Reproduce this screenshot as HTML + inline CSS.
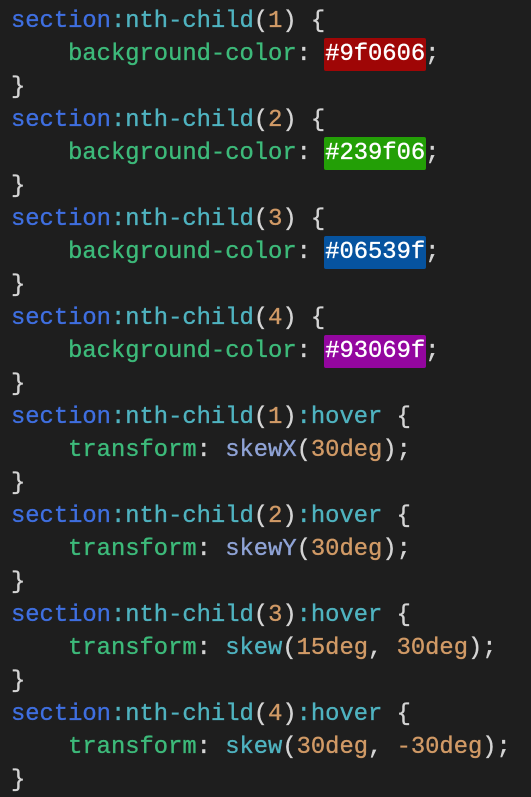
<!DOCTYPE html>
<html><head><meta charset="utf-8"><style>
html,body{margin:0;padding:0;background:#1e1e1e;}
body{width:531px;height:793px;overflow:hidden;}
pre{margin:0;padding:5px 0 0 11px;font-family:"Liberation Mono",monospace;font-size:23.8px;line-height:33px;color:#d4d4d4;-webkit-text-stroke:0.35px currentColor;}
.s{color:#3f6fe0}.t{color:#4fb3c0}.n{color:#d19a66}.p{color:#3dba7a}.f{color:#8fa3d6}.k{color:#4fb3c0}
.c{color:#fff;border-radius:2px;padding:3px 1px;margin:0 -1px}
</style></head><body><pre><span class="s">section</span><span class="t">:nth-child</span>(<span class="n">1</span>) {
    <span class="p">background-color</span>: <span class="c" style="background:#9f0606">#9f0606</span>;
}
<span class="s">section</span><span class="t">:nth-child</span>(<span class="n">2</span>) {
    <span class="p">background-color</span>: <span class="c" style="background:#239f06">#239f06</span>;
}
<span class="s">section</span><span class="t">:nth-child</span>(<span class="n">3</span>) {
    <span class="p">background-color</span>: <span class="c" style="background:#06539f">#06539f</span>;
}
<span class="s">section</span><span class="t">:nth-child</span>(<span class="n">4</span>) {
    <span class="p">background-color</span>: <span class="c" style="background:#93069f">#93069f</span>;
}
<span class="s">section</span><span class="t">:nth-child</span>(<span class="n">1</span>)<span class="t">:hover</span> {
    <span class="p">transform</span>: <span class="f">skewX</span>(<span class="n">30deg</span>);
}
<span class="s">section</span><span class="t">:nth-child</span>(<span class="n">2</span>)<span class="t">:hover</span> {
    <span class="p">transform</span>: <span class="f">skewY</span>(<span class="n">30deg</span>);
}
<span class="s">section</span><span class="t">:nth-child</span>(<span class="n">3</span>)<span class="t">:hover</span> {
    <span class="p">transform</span>: <span class="k">skew</span>(<span class="n">15deg</span>, <span class="n">30deg</span>);
}
<span class="s">section</span><span class="t">:nth-child</span>(<span class="n">4</span>)<span class="t">:hover</span> {
    <span class="p">transform</span>: <span class="k">skew</span>(<span class="n">30deg</span>, <span class="n">-30deg</span>);
}</pre></body></html>
